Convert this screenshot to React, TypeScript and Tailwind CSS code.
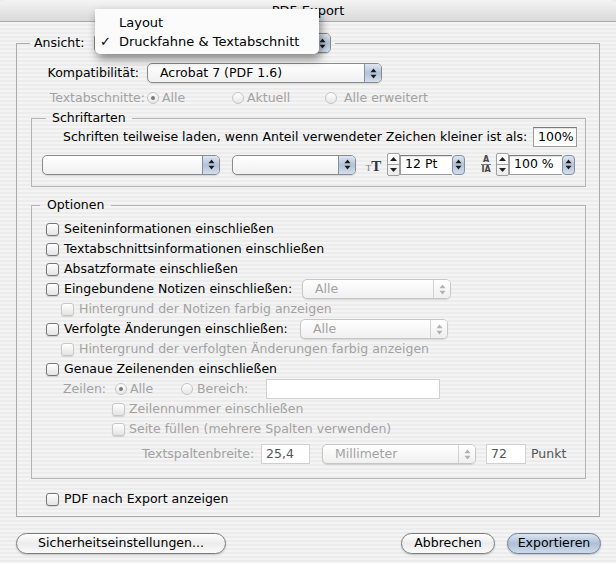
import React from 'react'

const base = "font-['DejaVu_Sans',sans-serif]"
const dim = 'text-[#a2a2a2]'

function Arrows({ disabled }: { disabled?: boolean }) {
  const c = disabled ? '#b0b0b0' : '#1a1a1a'
  return (
    <svg width="7" height="11" viewBox="0 0 7 11">
      <path d="M3.5 0.5L6.5 4.2H0.5Z" fill={c} />
      <path d="M3.5 10.5L6.5 6.8H0.5Z" fill={c} />
    </svg>
  )
}

function PopUp({ className = '', text, disabled }: { className?: string; text?: string; disabled?: boolean }) {
  return (
    <div
      className={`flex h-[20px] shrink-0 rounded-[5px] border bg-gradient-to-b from-white to-[#f0f0f0] shadow-[0_1px_1px_rgba(0,0,0,0.12)] ${
        disabled ? 'border-[#c6c6c6]' : 'border-[#8a8a8a]'
      } ${className}`}
    >
      <div className={`flex-1 flex items-center pl-[12px] whitespace-nowrap overflow-hidden ${disabled ? dim : ''}`}>{text}</div>
      <div
        className={`w-[17px] shrink-0 flex items-center justify-center rounded-r-[4px] border-l ${
          disabled
            ? 'border-[#d2d2d2] bg-gradient-to-b from-white to-[#efefef]'
            : 'border-[#7f8fa8] bg-gradient-to-b from-[#dfe7f1] via-[#b2c2d8] to-[#d4dfeb]'
        }`}
      >
        <Arrows disabled={disabled} />
      </div>
    </div>
  )
}

function Check({ disabled }: { disabled?: boolean }) {
  return (
    <span
      className={`w-[13px] h-[13px] shrink-0 rounded-[3px] border bg-gradient-to-b from-white to-[#e4e4e4] shadow-[0_1px_1px_rgba(0,0,0,0.12)] ${
        disabled ? 'border-[#c8c8c8]' : 'border-[#767676]'
      }`}
    />
  )
}

function Radio({ on, disabled }: { on?: boolean; disabled?: boolean }) {
  return (
    <span
      className={`w-[12px] h-[12px] shrink-0 rounded-full border flex items-center justify-center bg-gradient-to-b from-white to-[#e6e6e6] ${
        disabled ? 'border-[#c4c4c4]' : 'border-[#767676]'
      }`}
    >
      {on && <span className={`w-[4px] h-[4px] rounded-full ${disabled ? 'bg-[#7a7a7a]' : 'bg-black'}`} />}
    </span>
  )
}

function Field({ className = '', text, disabled }: { className?: string; text?: string; disabled?: boolean }) {
  return (
    <div
      className={`h-[20px] shrink-0 flex items-center px-[4px] bg-white border ${
        disabled ? 'border-[#d0d0d0]' : 'border-[#9c9c9c] border-t-[#7a7a7a] shadow-[inset_0_1px_1px_rgba(0,0,0,0.12)]'
      } ${className}`}
    >
      {text}
    </div>
  )
}

function Stepper() {
  return (
    <div className="w-[13px] h-[23px] shrink-0 flex flex-col border border-[#a0a0a0] rounded-[2px] bg-gradient-to-b from-white to-[#ececec]">
      <div className="flex-1 flex items-center justify-center border-b border-[#a0a0a0]">
        <svg width="7" height="4" viewBox="0 0 7 4"><path d="M3.5 0L7 4H0Z" fill="#222" /></svg>
      </div>
      <div className="flex-1 flex items-center justify-center">
        <svg width="7" height="4" viewBox="0 0 7 4"><path d="M3.5 4L7 0H0Z" fill="#222" /></svg>
      </div>
    </div>
  )
}

function ArrowBtn() {
  return (
    <div className="w-[13px] h-[20px] shrink-0 flex items-center justify-center rounded-[4px] border border-[#7f8fa8] bg-gradient-to-b from-[#dfe7f1] via-[#b2c2d8] to-[#d4dfeb]">
      <Arrows />
    </div>
  )
}

function Row({ pl, className = '', children }: { pl: string; className?: string; children: React.ReactNode }) {
  return <div className={`flex items-center h-[20px] ${pl} ${className}`}>{children}</div>
}

function PushButton({ className = '', children, primary }: { className?: string; children: React.ReactNode; primary?: boolean }) {
  return (
    <div
      className={`h-[21px] shrink-0 flex items-center justify-center rounded-full border shadow-[0_1px_2px_rgba(0,0,0,0.2)] ${
        primary
          ? 'border-[#6e7f9a] bg-gradient-to-b from-[#dde6f1] via-[#aebfd6] to-[#cfdbe9]'
          : 'border-[#7c7c7c] bg-gradient-to-b from-white via-[#ececec] to-[#fafafa]'
      } ${className}`}
    >
      {children}
    </div>
  )
}

export default function App() {
  return (
    <div
      className={`relative w-[616px] h-[563px] overflow-hidden ${base} text-[12.5px] text-black flex flex-col bg-[image:repeating-linear-gradient(180deg,#ececec_0px,#ececec_2px,#f4f4f4_2px,#f4f4f4_4px)]`}
    >
      <div className="h-[22px] shrink-0 flex items-center justify-center rounded-t-[6px] border-b border-[#a8a8a8] bg-gradient-to-b from-[#f4f4f4] to-[#d9d9d9] text-[13px]">
        PDF-Export
      </div>

      <fieldset className="mt-[11px] ml-4 w-[584px] h-[484px] shrink-0 min-w-0 border border-[#ababab]">
        <legend className="ml-[13px] px-[4px]">
          <div className="h-[20px] flex items-center gap-[10px]">
            <span>Ansicht:</span>
            {/* the open menu covers this popup's title */}
            <PopUp className="w-[237px]" />
          </div>
        </legend>

        <div className="flex items-center h-[20px] mt-[10px]">
          <span className="w-[122px] text-right">Kompatibilität:</span>
          <PopUp className="ml-[8px] w-[235px]" text="Acrobat 7 (PDF 1.6)" />
        </div>

        <div className={`flex items-center h-[20px] mt-[5px] ${dim}`}>
          <span className="w-[128px] text-right">Textabschnitte:</span>
          <div className="ml-[2px] w-[85px] flex items-center gap-[3px]">
            <Radio on disabled />
            Alle
          </div>
          <div className="w-[93px] flex items-center gap-[3px]">
            <Radio disabled />
            Aktuell
          </div>
          <div className="flex items-center gap-[7px]">
            <Radio disabled />
            Alle erweitert
          </div>
        </div>

        <fieldset className="mt-[2px] ml-[14px] w-[555px] h-[77px] min-w-0 border border-[#b4b4b4]">
          <legend className="ml-[14px] px-[6px] h-[16px] leading-[16px]">Schriftarten</legend>
          <div className="flex items-center h-[20px] mt-[1px] pl-[31px] pr-[8px]">
            <span className="whitespace-nowrap">Schriften teilweise laden, wenn Anteil verwendeter Zeichen kleiner ist als:</span>
            <Field className="ml-auto w-[44px]" text="100%" />
          </div>
          <div className="flex items-center h-[23px] mt-[6px] pl-[10px]">
            <PopUp className="w-[178px]" />
            <PopUp className="ml-[12px] w-[124px]" />
            <div className="ml-[9px] w-[17px] h-[20px] flex items-end justify-center font-['Liberation_Serif',serif] leading-none text-[#333]">
              <span className="text-[9px] mb-[2px] text-[#777]">T</span>
              <span className="text-[15px] font-bold mb-[1px]">T</span>
            </div>
            <div className="ml-[5px]">
              <Stepper />
            </div>
            <div className="flex items-center">
              <Field className="w-[52px] !border-r-0" text="12 Pt" />
              <ArrowBtn />
            </div>
            <div className="ml-[13px] w-[16px] h-[20px] flex flex-col items-center justify-center leading-none text-[#444] text-[8px] font-bold">
              <span>A</span>
              <span className="border-t border-[#777] pt-[1px]">IA</span>
            </div>
            <div className="ml-[2px]">
              <Stepper />
            </div>
            <div className="flex items-center">
              <Field className="w-[53px] !border-r-0" text="100 %" />
              <ArrowBtn />
            </div>
          </div>
        </fieldset>

        <fieldset className="mt-[10px] ml-[14px] w-[555px] h-[282px] min-w-0 border border-[#b4b4b4]">
          <legend className="ml-[8px] px-[7px] h-[16px] leading-[16px]">Optionen</legend>
          <div className="mt-[6px] flex flex-col">
            <Row pl="pl-[14px]" className="gap-[5px]">
              <Check />
              Seiteninformationen einschließen
            </Row>
            <Row pl="pl-[14px]" className="gap-[5px]">
              <Check />
              Textabschnittsinformationen einschließen
            </Row>
            <Row pl="pl-[14px]" className="gap-[5px]">
              <Check />
              Absatzformate einschließen
            </Row>
            <Row pl="pl-[14px]">
              <Check />
              <span className="ml-[5px] w-[238px] whitespace-nowrap">Eingebundene Notizen einschließen:</span>
              <PopUp className="w-[149px]" text="Alle" disabled />
            </Row>
            <Row pl="pl-[29px]" className={`gap-[5px] ${dim}`}>
              <Check disabled />
              Hintergrund der Notizen farbig anzeigen
            </Row>
            <Row pl="pl-[14px]">
              <Check />
              <span className="ml-[5px] w-[236px] whitespace-nowrap">Verfolgte Änderungen einschließen:</span>
              <PopUp className="w-[148px]" text="Alle" disabled />
            </Row>
            <Row pl="pl-[29px]" className={`gap-[5px] ${dim}`}>
              <Check disabled />
              Hintergrund der verfolgten Änderungen farbig anzeigen
            </Row>
            <Row pl="pl-[14px]" className="gap-[5px]">
              <Check />
              Genaue Zeilenenden einschließen
            </Row>
            <Row pl="pl-[31px]" className={dim}>
              <span className="w-[52px]">Zeilen:</span>
              <div className="w-[66px] flex items-center gap-[3px]">
                <Radio on disabled />
                Alle
              </div>
              <div className="w-[85px] flex items-center gap-[4px]">
                <Radio disabled />
                Bereich:
              </div>
              <Field className="w-[174px]" disabled />
            </Row>
            <Row pl="pl-[80px]" className={`gap-[4px] ${dim}`}>
              <Check disabled />
              Zeilennummer einschließen
            </Row>
            <Row pl="pl-[80px]" className={`gap-[4px] ${dim}`}>
              <Check disabled />
              Seite füllen (mehrere Spalten verwenden)
            </Row>
            <Row pl="pl-[110px]" className="mt-[5px]">
              <span className={`w-[119px] whitespace-nowrap ${dim}`}>Textspaltenbreite:</span>
              <Field className="w-[49px] text-[#555]" text="25,4" disabled />
              <PopUp className="ml-[12px] w-[154px]" text="Millimeter" disabled />
              <Field className="ml-[10px] w-[40px] text-[#555]" text="72" disabled />
              <span className="ml-[5px] text-[#555]">Punkt</span>
            </Row>
          </div>
        </fieldset>

        <Row pl="pl-[29px]" className="mt-[10px] gap-[5px]">
          <Check />
          PDF nach Export anzeigen
        </Row>
      </fieldset>

      <div className="mt-[16px] ml-4 mr-[15px] flex items-center">
        <PushButton className="w-[210px]">Sicherheitseinstellungen...</PushButton>
        <PushButton className="ml-auto w-[94px]">Abbrechen</PushButton>
        <PushButton className="ml-[12px] w-[94px]" primary>
          Exportieren
        </PushButton>
      </div>

      <div className="absolute left-[95px] top-[9px] w-[224px] h-[45px] pt-[4px] rounded-b-[5px] bg-[#fbfbfb] shadow-[2px_5px_10px_rgba(0,0,0,0.45)] text-[13px]">
        <div className="h-[19px] flex items-center pl-[24px]">Layout</div>
        <div className="h-[19px] flex items-center">
          <span className="w-[24px] pl-[5px]">✓</span>
          <span>Druckfahne &amp; Textabschnitt</span>
        </div>
      </div>
    </div>
  )
}
